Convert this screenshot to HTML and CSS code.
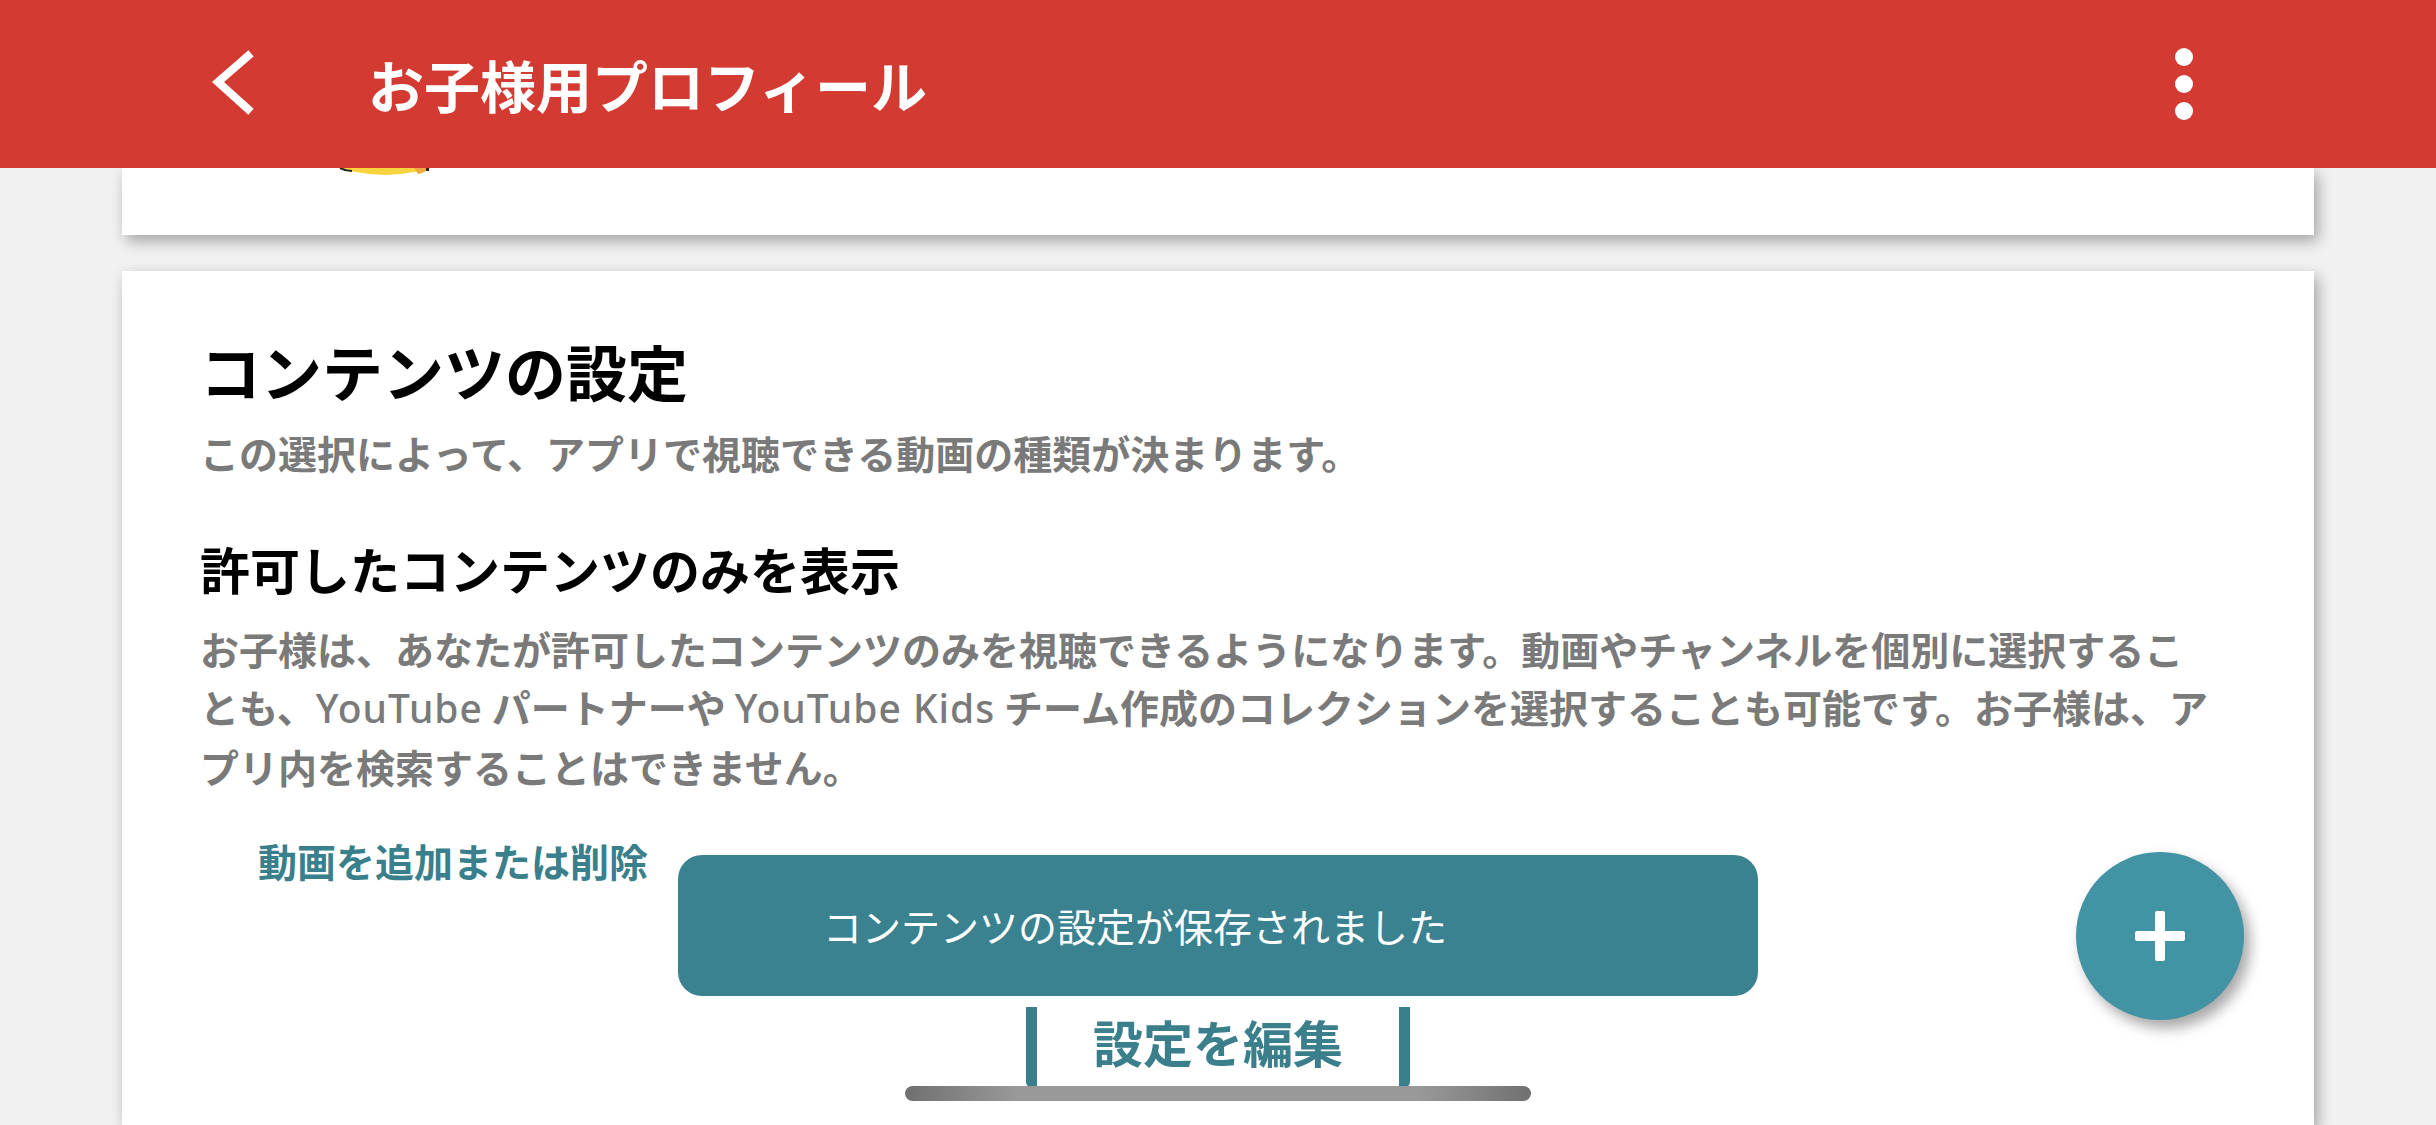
FILE: index.html
```html
<!DOCTYPE html>
<html lang="ja">
<head>
<meta charset="utf-8">
<title>お子様用プロフィール</title>
<link rel="stylesheet" href="styles.css">
</head>
<body>
<header class="appbar">
  <svg class="back" width="48" height="70" viewBox="0 0 48 70"><polyline points="38,7 8,33 38,60" fill="none" stroke="#fff" stroke-width="8" stroke-linecap="square" stroke-linejoin="miter"/></svg>
  <h1 class="appbar-title">お子様用プロフィール</h1>
  <div class="kebab"><span></span><span></span><span></span></div>
</header>
<main class="content">
  <section class="card card-top">
    <svg class="avatar" width="130" height="8" viewBox="0 0 130 8">
      <circle cx="55" cy="-143" r="150" fill="#f7d43f"/>
      <path d="M10 0 Q16 3 22 3" stroke="#222" stroke-width="2" fill="none"/>
      <path d="M84 0 L100 0 Q96 4 88 6 Z" fill="#f0a93a"/>
      <rect x="96" y="0" width="3" height="3" fill="#222"/>
    </svg>
  </section>
  <section class="card card-main">
    <h2 class="heading">コンテンツの設定</h2>
    <p class="subtitle">この選択によって、アプリで視聴できる動画の種類が決まります。</p>
    <h3 class="subheading">許可したコンテンツのみを表示</h3>
    <p class="desc">お子様は、あなたが許可したコンテンツのみを視聴できるようになります。動画やチャンネルを個別に選択するこ<br>とも、<span class="latin">YouTube</span> パートナーや <span class="latin">YouTube Kids</span> チーム作成のコレクションを選択することも可能です。お子様は、ア<br>プリ内を検索することはできません。</p>
    <a class="link">動画を追加または削除</a>
    <div class="edit-btn">設定を編集</div>
    <div class="toast">コンテンツの設定が保存されました</div>
    <div class="fab"><span class="plus-h"></span><span class="plus-v"></span></div>
  </section>
</main>
<div class="home-indicator"></div>
</body>
</html>
```

FILE: styles.css
```css
html, body {
  margin: 0;
  padding: 0;
}
body {
  width: 2436px;
  height: 1125px;
  overflow: hidden;
  background: #f1f1f1;
  font-family: "Noto Sans CJK JP", "Noto Sans", sans-serif;
}
.appbar {
  position: relative;
  z-index: 2;
  height: 168px;
  background: #d33a32;
  display: flex;
  align-items: center;
  color: #fff;
}
.back {
  margin-left: 210px;
  flex: none;
}
.appbar-title {
  margin: 0 0 0 110px;
  font-size: 56px;
  font-weight: 700;
  line-height: 1;
}
.kebab {
  margin-left: auto;
  margin-right: 243px;
  display: flex;
  flex-direction: column;
  gap: 9px;
}
.kebab span {
  width: 18px;
  height: 18px;
  border-radius: 50%;
  background: #fff;
}
.content {
  padding: 0 122px;
}
.card {
  background: #fff;
  box-shadow: 4px 6px 14px rgba(0, 0, 0, 0.32);
}
.card-top {
  height: 67px;
  overflow: hidden;
}
.avatar {
  display: block;
  margin-left: 208px;
}
.card-main {
  position: relative;
  margin-top: 36px;
  height: 790px;
  padding: 64px 78px 0;
}
.heading {
  margin: 0;
  font-size: 61px;
  line-height: 72px;
  font-weight: 700;
  color: #000;
}
.subtitle {
  margin: 16px 0 0;
  font-size: 39px;
  line-height: 58px;
  font-weight: 700;
  color: #7a7a7a;
}
.subheading {
  margin: 55px 0 0;
  font-size: 50px;
  line-height: 64px;
  font-weight: 700;
  color: #000;
}
.desc {
  margin: 19px 0 0;
  font-size: 39px;
  line-height: 58px;
  font-weight: 700;
  color: #7a7a7a;
  white-space: nowrap;
}
.latin {
  font-family: "Noto Sans", sans-serif;
  font-weight: 500;
  letter-spacing: 1px;
}
.link {
  display: block;
  margin-top: 36px;
  padding-left: 58px;
  font-size: 39px;
  line-height: 58px;
  font-weight: 700;
  color: #3a7f8c;
}
.edit-btn {
  box-sizing: border-box;
  width: 384px;
  height: 81px;
  margin: 118px auto 0;
  border-left: 11px solid #3a808c;
  border-right: 11px solid #3a808c;
  border-radius: 0 0 6px 6px;
  text-align: center;
  font-size: 50px;
  line-height: 68px;
  font-weight: 700;
  color: #3a7f8b;
}
.toast {
  position: absolute;
  left: 556px;
  top: 584px;
  width: 1080px;
  height: 141px;
  box-sizing: border-box;
  padding-left: 145px;
  border-radius: 24px;
  background: #3b8290;
  color: #fff;
  font-size: 39px;
  font-weight: 400;
  line-height: 141px;
}
.fab {
  position: absolute;
  left: 1954px;
  top: 581px;
  width: 168px;
  height: 168px;
  border-radius: 50%;
  background: #4293a3;
  box-shadow: 6px 8px 14px rgba(0, 0, 0, 0.35);
}
.plus-h, .plus-v {
  position: absolute;
  background: #fff;
  border-radius: 2px;
}
.plus-h {
  left: 59px;
  top: 79px;
  width: 50px;
  height: 10px;
}
.plus-v {
  left: 79px;
  top: 59px;
  width: 10px;
  height: 50px;
}
.home-indicator {
  position: fixed;
  left: 905px;
  top: 1086px;
  width: 626px;
  height: 15px;
  border-radius: 8px;
  background: linear-gradient(to right, #707070 0%, #999 18%, #999 82%, #707070 100%);
  z-index: 3;
}
```
